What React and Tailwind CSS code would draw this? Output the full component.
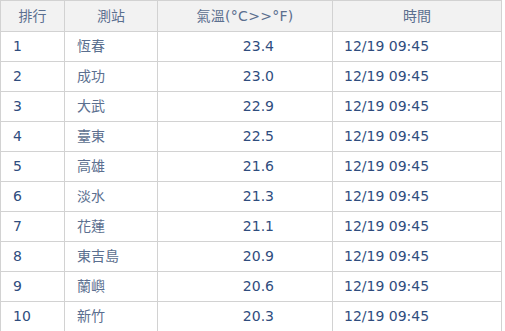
const rows = [
  ['1', '恆春', '23.4'],
  ['2', '成功', '23.0'],
  ['3', '大武', '22.9'],
  ['4', '臺東', '22.5'],
  ['5', '高雄', '21.6'],
  ['6', '淡水', '21.3'],
  ['7', '花蓮', '21.1'],
  ['8', '東吉島', '20.9'],
  ['9', '蘭嶼', '20.6'],
  ['10', '新竹', '20.3'],
]

export default function App() {
  return (
    <div className="bg-white w-[505px] h-[331px] overflow-hidden" style={{ fontFamily: '"DejaVu Sans", "Noto Sans CJK TC", sans-serif' }}>
      <table className="w-[502px] border-collapse text-[14px] text-[#2f4d7e] table-fixed">
        <colgroup>
          <col className="w-[64px]" />
          <col className="w-[93px]" />
          <col className="w-[175px]" />
          <col />
        </colgroup>
        <thead>
          <tr className="h-[31px] bg-[#f2f2f2] text-[#5b6f8f]">
            <th className="border border-[#d2d2d2] font-normal text-center">排行</th>
            <th className="border border-[#d2d2d2] font-normal text-center">測站</th>
            <th className="border border-[#d2d2d2] font-normal text-center tracking-[0.3px]">氣溫(°C&gt;&gt;°F)</th>
            <th className="border border-[#d2d2d2] font-normal text-center">時間</th>
          </tr>
        </thead>
        <tbody>
          {rows.map((r) => (
            <tr key={r[0]} className="h-[30px]">
              <td className="border border-[#d2d2d2] pl-[12px]">{r[0]}</td>
              <td className="border border-[#d2d2d2] pl-[12px] text-[#5b6f8f]">{r[1]}</td>
              <td className="border border-[#d2d2d2] text-right pr-[58px]">{r[2]}</td>
              <td className="border border-[#d2d2d2] pl-[11px]">12/19 09:45</td>
            </tr>
          ))}
        </tbody>
      </table>
    </div>
  )
}
